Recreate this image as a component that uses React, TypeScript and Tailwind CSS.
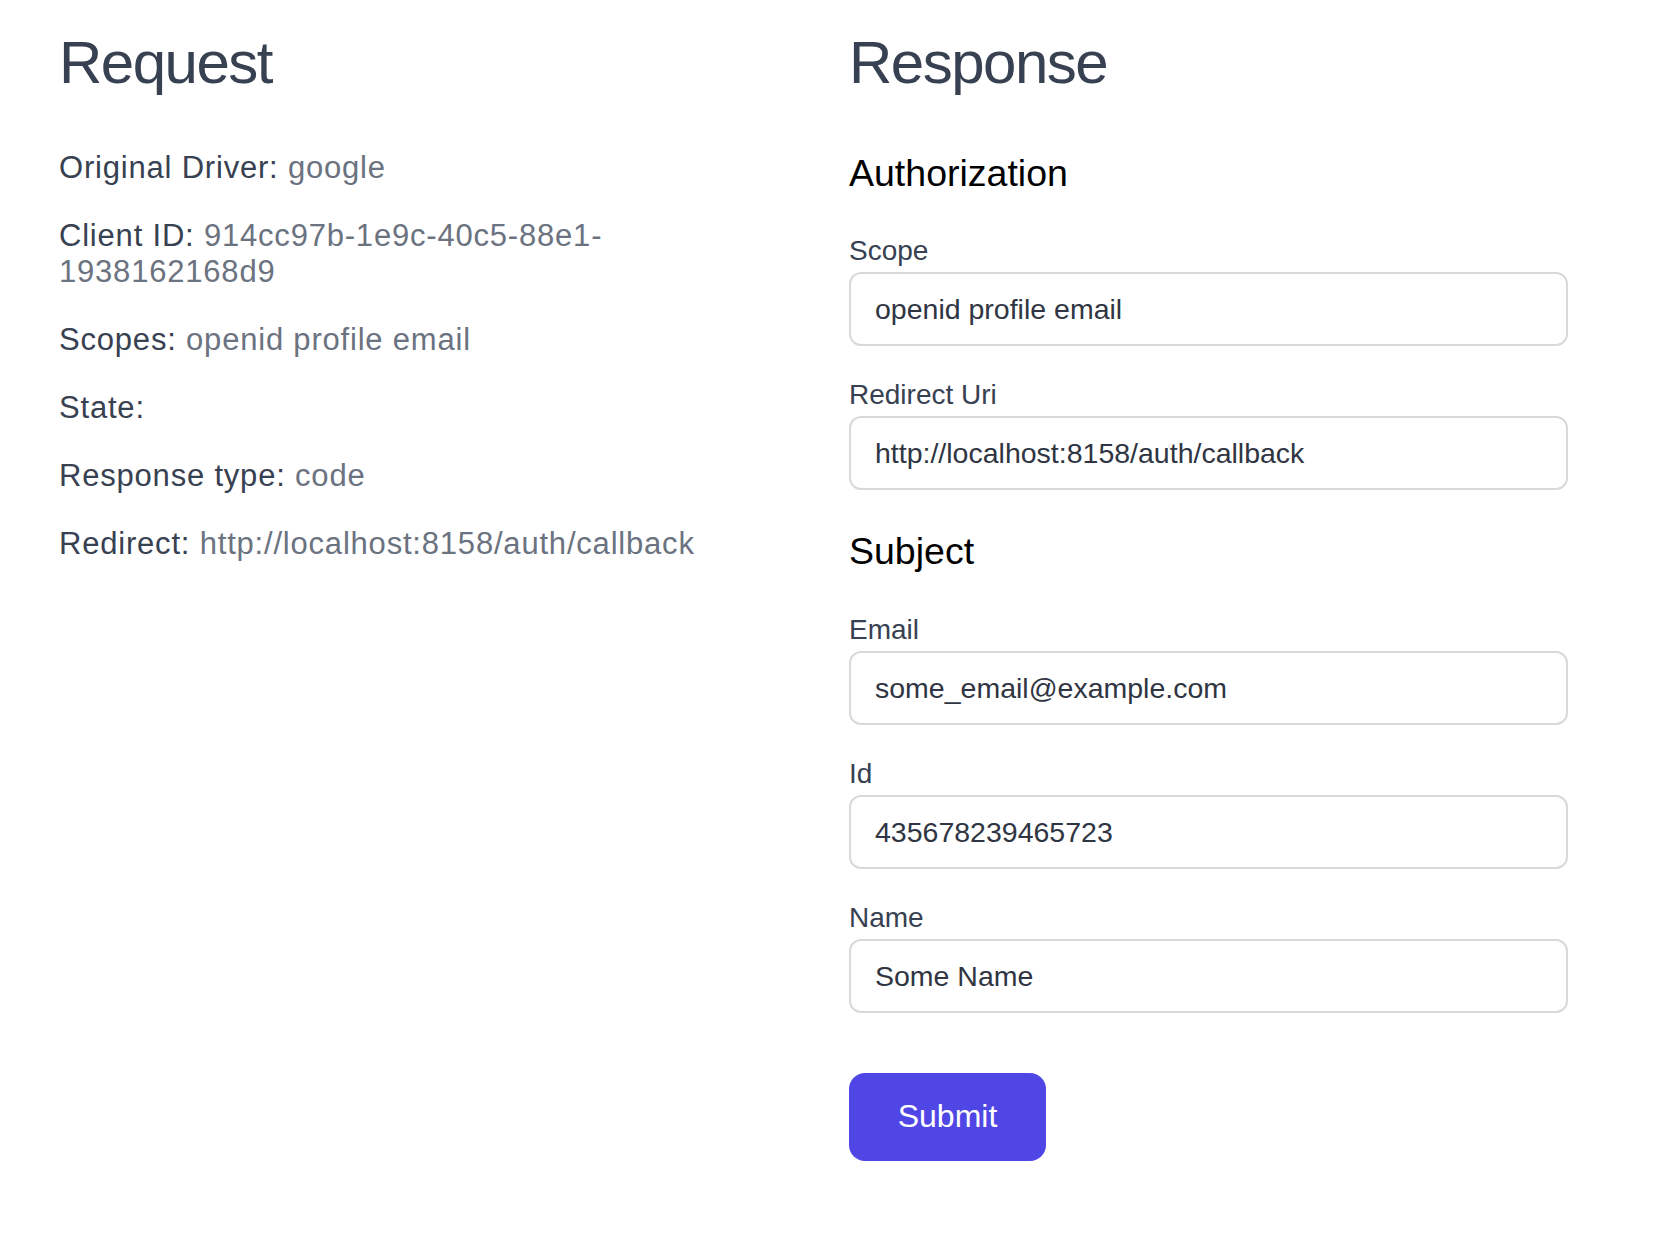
import type { ReactNode } from "react";

const requestInfo: { label: string; value: ReactNode }[] = [
  { label: "Original Driver:", value: "google" },
  {
    label: "Client ID:",
    value: (
      <>
        914cc97b-1e9c-40c5-88e1-
        <wbr />
        1938162168d9
      </>
    ),
  },
  { label: "Scopes:", value: "openid profile email" },
  { label: "State:", value: "" },
  { label: "Response type:", value: "code" },
  { label: "Redirect:", value: "http://localhost:8158/auth/callback" },
];

const authorizationFields = [
  { label: "Scope", value: "openid profile email" },
  { label: "Redirect Uri", value: "http://localhost:8158/auth/callback" },
];

const subjectFields = [
  { label: "Email", value: "some_email@example.com" },
  { label: "Id", value: "435678239465723" },
  { label: "Name", value: "Some Name" },
];

const Field = ({ label, value }: { label: string; value: string }) => (
  <label className="block">
    <span className="block text-[28px] leading-[32px] text-[#374151]">{label}</span>
    <input
      defaultValue={value}
      className="mt-[5.5px] block h-[74px] w-full rounded-[12px] border-2 border-[#d9d9d9] bg-white px-[24px] text-[28.5px] text-[#2f3542] outline-none"
    />
  </label>
);

export default function App() {
  return (
    <div
      className="min-h-screen bg-white pt-[33px] pl-[59px]"
      style={{ fontFamily: '"Liberation Sans", Arial, Helvetica, sans-serif' }}
    >
      <div className="grid grid-cols-[719px_719px] gap-x-[71px]">
        <div>
          <h1 className="text-[60px] leading-[60px] font-medium tracking-tight text-[#374151]">Request</h1>
          <div className="mt-[57px] flex flex-col gap-[32px]">
            {requestInfo.map((item) => (
              <p key={item.label} className="text-[31px] leading-[36px] tracking-[0.8px]">
                <span className="font-medium text-[#374151]">{item.label}</span>{" "}
                <span className="text-[#6b7280]">{item.value}</span>
              </p>
            ))}
          </div>
        </div>

        <div>
          <h1 className="text-[60px] leading-[60px] font-medium tracking-tight text-[#374151]">Response</h1>

          <h2 className="mt-[58px] text-[37.5px] leading-[44px] text-black">Authorization</h2>
          <div className="mt-[39.5px] flex flex-col gap-[32.5px]">
            {authorizationFields.map((f) => (
              <Field key={f.label} label={f.label} value={f.value} />
            ))}
          </div>

          <h2 className="mt-[39px] text-[37.5px] leading-[44px] text-black">Subject</h2>
          <div className="mt-[40.5px] flex flex-col gap-[32.5px]">
            {subjectFields.map((f) => (
              <Field key={f.label} label={f.label} value={f.value} />
            ))}
          </div>

          <button
            type="button"
            className="mt-[60px] flex h-[88px] w-[197px] items-center justify-center rounded-[16px] bg-[#4f46e5] pb-[3px] text-[32px] text-white"
          >
            Submit
          </button>
        </div>
      </div>
    </div>
  );
}
